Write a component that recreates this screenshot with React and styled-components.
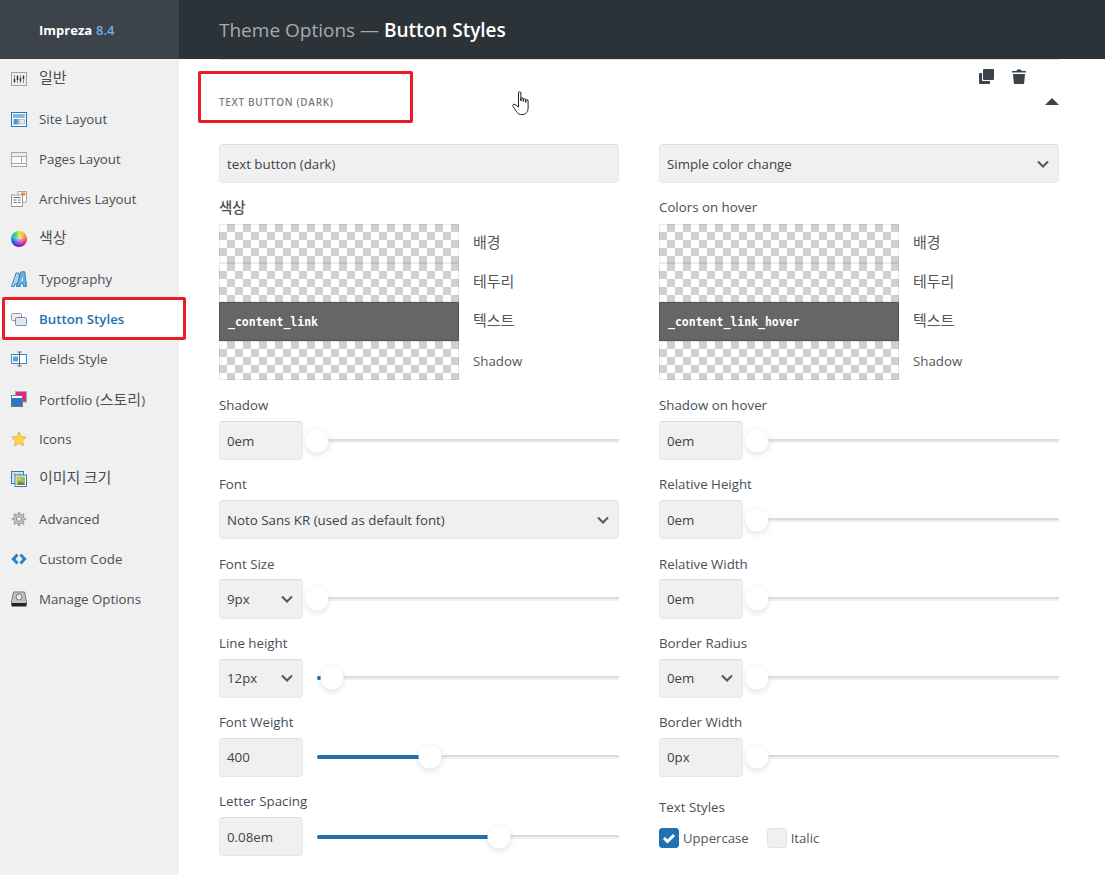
import React from "react";
import styled, { createGlobalStyle } from "styled-components";

const Global = createGlobalStyle`
  html, body { margin: 0; padding: 0; background: #fff; }
  body { font-family: "Open Sans", "Noto Sans CJK KR", sans-serif; color: #3c434a; overflow: hidden; }
  * { box-sizing: border-box; }
`;

const Page = styled.div`
  position: relative; width: 1105px; height: 875px; overflow: hidden;
  display: grid; grid-template-columns: 179px 1fr; background: #fff;
`;
const Sidebar = styled.aside`background: #f0f0f0; display: flex; flex-direction: column;`;
const Brand = styled.div`
  height: 59px; background: #3c434a; color: #fff; font-size: 13px; font-weight: 700;
  display: flex; align-items: center; padding-left: 39px; gap: 4px;
  span { color: #72aee6; font-weight: 600; }
`;
const NavItem = styled.div`
  height: 40px; display: flex; align-items: center; gap: 12px; padding-left: 11px;
  font-size: 13.3px; line-height: 20px; font-weight: ${p => (p.$active ? 600 : 500)}; white-space: nowrap;
  color: ${p => (p.$active ? "#2271b1" : "#484f56")};
  background: ${p => (p.$active ? "#fff" : "transparent")};
  svg { flex: none; width: 16px; height: 16px; }
`;
const Ko = styled.span`
  font-family: "Noto Sans CJK KR", sans-serif; font-size: ${p => p.$size || "15px"}; font-weight: ${p => p.$w || 400};
  vertical-align: ${p => p.$raise ?? 3}px; line-height: 20px;
`;
const Wheel = styled.span`
  flex: none; width: 16px; height: 16px; border-radius: 50%;
  background:
    radial-gradient(circle, rgba(255,255,255,.6) 0, rgba(255,255,255,0) 55%),
    conic-gradient(#d8e83a 0deg, #f8a03a 60deg, #f0308a 120deg, #9020e0 180deg, #2a50e8 240deg, #20c0c0 290deg, #50d040 330deg, #d8e83a 360deg);
  box-shadow: inset 0 -1px 1px rgba(40,20,80,.5);
`;
const Main = styled.main`display: flex; flex-direction: column; min-width: 0;`;
const TopBar = styled.header`
  height: 59px; background: #2c3338; color: #a7aaad; font-size: 19px; flex: none;
  display: flex; align-items: center; padding-left: 40px; white-space: pre;
  strong { color: #fff; font-weight: 600; }
`;
const Section = styled.section`
  margin: 0 46px 0 40px; width: 840px; border-top: 1px solid #ddd;
`;
const Head = styled.div`
  height: 84px; display: flex; justify-content: space-between; align-items: flex-start;
`;
const Title = styled.h2`
  margin: 33px 0 0; font-size: 10px; line-height: 18px; font-weight: 600; letter-spacing: .68px;
  text-transform: uppercase; color: #787c82;
`;
const HeadSide = styled.div`display: flex; flex-direction: column; align-items: flex-end;`;
const Actions = styled.div`display: flex; gap: 18px; margin: 9px 33px 0 0; color: #3c434a; align-items: center;`;
const Caret = styled.svg`margin-top: 14px; display: block;`;
const Columns = styled.div`display: grid; grid-template-columns: 400px 400px; column-gap: 40px;`;
const Col = styled.div`display: flex; flex-direction: column;`;
const Control = styled.div`
  height: ${p => p.$h || "39.2px"}; width: ${p => p.$w || "84px"}; flex: none;
  background: #f0f0f0; border: 1px solid #e8e8e8; border-top-color: #dcdcde; border-radius: 4px;
  display: flex; align-items: center; justify-content: space-between;
  padding: 0 8px 0 7px; font-size: 13.3px; color: #3c434a; white-space: nowrap;
  margin-bottom: ${p => p.$after || 0};
  svg { flex: none; }
`;
const Label = styled.div`
  height: 20px; line-height: 20px; font-size: 13.3px; font-weight: 500; color: #484f56;
  padding-top: .3px; margin-bottom: ${p => p.$gap || "6px"};
`;
const Field = styled.div`margin-bottom: 14px;`;
const Row = styled.div`display: flex; gap: 14px; align-items: center;`;
const Slider = styled.div`position: relative; flex: 1; height: 4px;
  background: linear-gradient(#dcdcde 0 2px, #f0f0f0 2px);
`;
const Fill = styled.div`position: absolute; left: 0; top: 0; height: 4px; border-radius: 2px; background: #2271b1;`;
const Thumb = styled.div`
  position: absolute; top: 50%; width: 23px; height: 23px; border-radius: 50%; background: #fff;
  transform: translate(-50%, -50%); box-shadow: 0 2px 6px rgba(0,0,0,.13);
`;
const ColorGrid = styled.div`
  display: grid; grid-template-columns: 240px 1fr; grid-auto-rows: 39px; margin-bottom: 15px; align-items: center;
`;
const Swatch = styled.div`
  height: 39px; padding-left: 9px; display: flex; align-items: center;
  font: 700 11.5px "DejaVu Sans Mono", monospace; color: #fff;
  background: ${p => (p.$dark ? "#666" : "repeating-conic-gradient(#d0d0d0 0 25%, #fff 0 50%) 0 0 / 16px 16px")};
  box-shadow: inset 0 0 0 1px rgba(0,0,0,${p => (p.$dark ? ".15" : ".08")});
`;
const SwatchName = styled.div`padding-left: 14px; font-size: 13.3px; line-height: 20px; color: #50575e;`;
const TextStyles = styled.div`margin-top: 6px;`;
const Checks = styled.div`display: flex; align-items: center; font-size: 13.15px; color: #50575e;`;
const Box = styled.div`
  width: 20px; height: 20px; border-radius: 3px; margin-right: 4px; display: flex; align-items: center; justify-content: center;
  background: ${p => (p.$on ? "#2271b1" : "#f0f0f0")};
  border: 1px solid ${p => (p.$on ? "#2271b1" : "#e4e4e4")};
`;
const CheckText = styled.span`margin-right: 18px;`;
const Callout = styled.div`
  position: absolute; left: ${p => p.$x}px; top: ${p => p.$y}px; width: ${p => p.$w}px; height: ${p => p.$h}px;
  border: 3px solid #ed1c24; border-radius: 2px; pointer-events: none;
`;
const Cursor = styled.svg`position: absolute; left: 512px; top: 91px;`;

const Chevron = () => (
  <svg width="14" height="14" viewBox="0 0 14 14" fill="none" stroke="#50575e" strokeWidth="2"><path d="M2 4.500l5 5 5-5" /></svg>
);

const I = {
  general: <svg viewBox="0 0 16 16"><rect x=".5" y="1.500" width="15" height="13" fill="#eee" stroke="#a4a4a4" /><path d="M3.500 4v8M6.500 4v8M9.500 4v8M12.500 4v8" stroke="#8a8a8a" /><path d="M3.500 8v3M6.500 5v4M9.500 7v3M12.500 5v3" stroke="#333" strokeWidth="1.500" /></svg>,
  site: <svg viewBox="0 0 16 16"><rect x=".5" y="1.500" width="15" height="14" fill="#fff" stroke="#1f7ab8" /><rect x="2.500" y="3.500" width="11" height="3" fill="#7dbbe6" stroke="#4b9ad2" strokeWidth=".5" /><rect x="2.500" y="8" width="5" height="5.500" fill="#4b9ad2" /><rect x="8.500" y="8.500" width="5" height="4.500" fill="#e8e8e8" stroke="#aaa" strokeWidth=".7" /></svg>,
  pages: <svg viewBox="0 0 16 16"><rect x=".5" y="1.500" width="15" height="14" fill="#fafafa" stroke="#a9a9a9" /><rect x="1" y="2" width="14" height="3" fill="#eee" /><path d="M1 5.500h14M1 12.500h14M10.500 5.500v7" stroke="#a9a9a9" /></svg>,
  archives: <svg viewBox="0 0 16 16"><rect x="7" y=".5" width="8.500" height="10.500" fill="#fff" stroke="#a9a9a9" /><rect x="10" y="1.500" width="4.500" height="3" fill="#ee8a3a" /><rect x=".5" y="4" width="11" height="11.500" fill="#fff" stroke="#999" /><path d="M2.500 6.500h7M2.500 9h3M7 9h2.500M2.500 11.500h3M7 11.500h2.500" stroke="#4b6f8f" /></svg>,
  type: <svg viewBox="0 0 16 16"><path d="M.5 15.500L5 2h3l1 13.500H6l-.2-2.500H4l-.8 2.500z" fill="#a9d2f0" stroke="#2a7db5" strokeWidth=".9" /><path d="M5.500 15.500L10 .8h3.800L15.500 15.500h-3l-.3-3H9.800l-.9 3z" fill="#6fb0e2" stroke="#2a7db5" strokeWidth=".9" /><path d="M10.400 9.800l1.300-4.600.3 4.600z" fill="#fff" /></svg>,
  button: <svg viewBox="0 0 16 16"><rect x=".5" y="2.500" width="10" height="7" rx="1" fill="#eee" stroke="#8a97a5" /><rect x="4.500" y="6.500" width="11" height="8" rx="1" fill="#dfe8f2" stroke="#7c8b9b" /></svg>,
  fields: <svg viewBox="0 0 16 16"><rect x=".5" y="3.500" width="15" height="9" fill="#fff" stroke="#2a8dcc" /><rect x="2" y="5.500" width="5" height="5" fill="#5aa5d8" /><path d="M8.500 1v14M6.500 1h4M6.500 15h4" stroke="#666" /></svg>,
  portfolio: <svg viewBox="0 0 16 16"><rect x="4.500" y=".5" width="11" height="10.500" fill="#e6218e" stroke="#aaa" /><rect x=".5" y="4.500" width="11" height="11" fill="#2f74d0" stroke="#777" /><rect x="1" y="5" width="10" height="2" fill="#fff" /></svg>,
  star: <svg viewBox="0 0 16 16"><path d="M8 .8l2.200 4.700 5.100.7-3.700 3.500.9 5.100L8 12.400l-4.500 2.400.9-5.100L.7 6.200l5.100-.7z" fill="#fcd34d" stroke="#eeb25e" /></svg>,
  image: <svg viewBox="0 0 16 16"><rect x=".5" y=".5" width="12" height="12" fill="#cfe5f5" stroke="#2a7db5" /><path d="M2 2h3v2H2zM7 2h3v2H7z" fill="#f6c445" /><rect x="4" y="4" width="11.500" height="11.500" fill="#fff" stroke="#2a7db5" /><rect x="5.500" y="5.500" width="8.500" height="8.500" fill="#8dc26f" /><circle cx="8" cy="8" r="1.500" fill="#f6c445" /><path d="M6 14l3-4 2 2 1-1 2 3z" fill="#a6662e" /></svg>,
  gear: <svg viewBox="0 0 16 16"><path d="M8 .8v14.400M.8 8h14.400M2.900 2.900l10.200 10.200M13.100 2.900L2.900 13.100" stroke="#aaa" strokeWidth="2.200" /><circle cx="8" cy="8" r="5" fill="#ccc" stroke="#999" /><circle cx="8" cy="8" r="2.500" fill="#f0f0f0" stroke="#888" /></svg>,
  code: <svg viewBox="0 0 16 16" fill="#2a83c6"><path d="M5.500 2.500L.3 8l5.200 5.500 2-2L4.500 8l3-3.500zM10.500 2.500L15.700 8l-5.200 5.500-2-2L11.500 8l-3-3.500z" /></svg>,
  manage: <svg viewBox="0 0 16 16"><path d="M2.500 1h11l2 10v2H.5v-2z" fill="#c4c4c4" stroke="#777" /><circle cx="8" cy="6" r="3" fill="#eee" stroke="#777" /><rect x=".5" y="12" width="15" height="3.500" fill="#222" /></svg>,
};

const nav = [
  ["general", <Ko>일반</Ko>], ["site", "Site Layout"], ["pages", "Pages Layout"], ["archives", "Archives Layout"],
  ["color", <Ko>색상</Ko>], ["type", "Typography"], ["button", "Button Styles", true], ["fields", "Fields Style"],
  ["portfolio", <span>Portfolio (<Ko $raise={0}>스토리</Ko>)</span>], ["star", "Icons"], ["image", <Ko>이미지 크기</Ko>], ["gear", "Advanced"],
  ["code", "Custom Code"], ["manage", "Manage Options"],
];

const TRACK = 302;
const SliderField = ({ label, value, select, at = 0 }) => (
  <Field>
    <Label>{label}</Label>
    <Row>
      <Control>{value}{select && <Chevron />}</Control>
      <Slider>
        {at > 0 && <Fill style={{ width: at }} />}
        <Thumb style={{ left: `${(at / TRACK) * 100}%` }} />
      </Slider>
    </Row>
  </Field>
);

const Colors = ({ label, link }) => (
  <>
    <Label $gap="7px">{label}</Label>
    <ColorGrid>
      <Swatch /><SwatchName><Ko>배경</Ko></SwatchName>
      <Swatch /><SwatchName><Ko>테두리</Ko></SwatchName>
      <Swatch $dark>{link}</Swatch><SwatchName><Ko>텍스트</Ko></SwatchName>
      <Swatch /><SwatchName>Shadow</SwatchName>
    </ColorGrid>
  </>
);

export default function App() {
  return (
    <>
      <Global />
      <Page>
        <Sidebar>
          <Brand>Impreza <span>8.4</span></Brand>
          {nav.map(([k, t, a]) => (
            <NavItem key={k} $active={a}>{k === "color" ? <Wheel /> : I[k]}<span>{t}</span></NavItem>
          ))}
        </Sidebar>
        <Main>
          <TopBar>Theme Options — <strong>Button Styles</strong></TopBar>
          <Section>
            <Head>
              <Title>Text button (dark)</Title>
              <HeadSide>
                <Actions>
                  <svg width="15" height="15" viewBox="0 0 15 15" fill="#3c434a"><rect x="4" y="0" width="11" height="11" rx="1" /><path d="M3 4H1a1 1 0 0 0-1 1v9a1 1 0 0 0 1 1h9a1 1 0 0 0 1-1v-2H4a1 1 0 0 1-1-1z" /></svg>
                  <svg width="14" height="15" viewBox="0 0 14 15" fill="#3c434a"><path d="M0 2h4.500l.5-1.500h4l.5 1.500H14v1.500H0zM1 5h12l-.8 9a1 1 0 0 1-1 1H2.800a1 1 0 0 1-1-1z" /></svg>
                </Actions>
                <Caret width="14" height="7" viewBox="0 0 14 7" fill="#3c434a"><path d="M7 0l7 7H0z" /></Caret>
              </HeadSide>
            </Head>
            <Columns>
              <Col>
                <Control $w="400px" $h="39px" $after="14px">text button (dark)</Control>
                <Colors label={<Ko $w={500} $size="14.5px" $raise={2}>색상</Ko>} link="_content_link" />
                <SliderField label="Shadow" value="0em" />
                <Field>
                  <Label>Font</Label>
                  <Control $w="400px">Noto Sans KR (used as default font)<Chevron /></Control>
                </Field>
                <SliderField label="Font Size" value="9px" select />
                <SliderField label="Line height" value="12px" select at={15} />
                <SliderField label="Font Weight" value="400" at={113} />
                <SliderField label="Letter Spacing" value="0.08em" at={182} />
              </Col>
              <Col>
                <Control $w="400px" $h="39px" $after="14px">Simple color change<Chevron /></Control>
                <Colors label="Colors on hover" link="_content_link_hover" />
                <SliderField label="Shadow on hover" value="0em" />
                <SliderField label="Relative Height" value="0em" />
                <SliderField label="Relative Width" value="0em" />
                <SliderField label="Border Radius" value="0em" select />
                <SliderField label="Border Width" value="0px" />
                <TextStyles>
                  <Label $gap="11px">Text Styles</Label>
                  <Checks>
                    <Box $on><svg width="14" height="14" viewBox="0 0 14 14" fill="none" stroke="#fff" strokeWidth="3"><path d="M2 7l3.500 3.500L12 4" /></svg></Box>
                    <CheckText>Uppercase</CheckText>
                    <Box />
                    <CheckText>Italic</CheckText>
                  </Checks>
                </TextStyles>
              </Col>
            </Columns>
          </Section>
        </Main>
        <Callout $x={198} $y={71} $w={215} $h={52} />
        <Callout $x={2} $y={297} $w={184} $h={43} />
        <Cursor width="18" height="25" viewBox="0 0 18 25" fill="#fff" stroke="#222" strokeWidth="1">
          <path d="M6.500 14V2a1.200 1.200 0 0 1 2.400 0v8V8a1.200 1.200 0 0 1 2.400 0v2.500V9a1.200 1.200 0 0 1 2.400 0v2.500V10a1.200 1.200 0 0 1 2.400 0v7c0 3-2 6.500-5 6.500H8.500c-2 0-3-1.500-4-3L1 15.500c-1-1.500.8-3 2-2l3.500 2.500z" />
        </Cursor>
      </Page>
    </>
  );
}
